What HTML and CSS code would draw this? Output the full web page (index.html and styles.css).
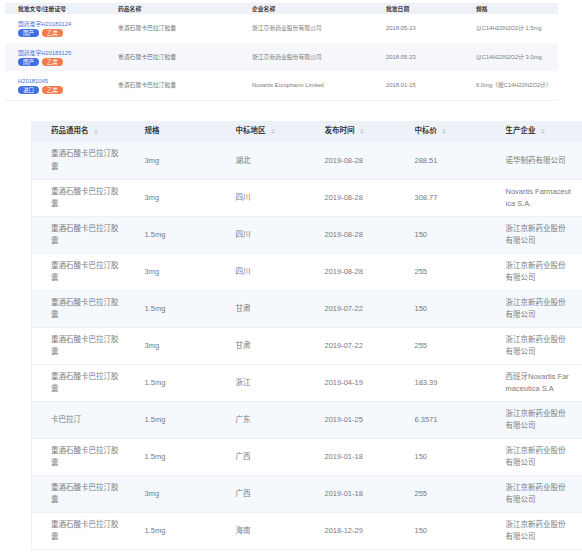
FILE: index.html
```html
<!DOCTYPE html>
<html lang="zh">
<head>
<meta charset="utf-8">
<title>药品中标信息</title>
<link rel="stylesheet" href="styles.css">
</head>
<body>
<div class="page">
  <table class="approvals">
    <thead>
      <tr>
        <th class="c1">批准文号/注册证号</th>
        <th class="c2">药品名称</th>
        <th class="c3">企业名称</th>
        <th class="c4">批准日期</th>
        <th class="c5">规格</th>
      </tr>
    </thead>
    <tbody>
      <tr>
        <td class="c1"><div class="cert"><a class="cert-no">国药准字H20183124</a><div class="tags"><span class="tag tag-blue">国产</span><span class="tag tag-orange">乙类</span></div></div></td>
        <td>重酒石酸卡巴拉汀胶囊</td>
        <td>浙江京新药业股份有限公司</td>
        <td>2018-05-23</td>
        <td>以C14H22N2O2计 1.5mg</td>
      </tr>
      <tr class="striped">
        <td class="c1"><div class="cert"><a class="cert-no">国药准字H20183125</a><div class="tags"><span class="tag tag-blue">国产</span><span class="tag tag-orange">乙类</span></div></div></td>
        <td>重酒石酸卡巴拉汀胶囊</td>
        <td>浙江京新药业股份有限公司</td>
        <td>2018-05-23</td>
        <td>以C14H22N2O2计 3.0mg</td>
      </tr>
      <tr>
        <td class="c1"><div class="cert"><a class="cert-no">H20181045</a><div class="tags"><span class="tag tag-blue">进口</span><span class="tag tag-orange">乙类</span></div></div></td>
        <td>重酒石酸卡巴拉汀胶囊</td>
        <td>Novartis Europharm Limited</td>
        <td>2018-01-15</td>
        <td>6.0mg（按C14H22N2O2计）</td>
      </tr>
    </tbody>
  </table>

  <table class="bids">
    <thead>
      <tr>
        <th class="b1">药品通用名<span class="sort"></span></th>
        <th class="b2">规格</th>
        <th class="b3">中标地区<span class="sort"></span></th>
        <th class="b4">发布时间<span class="sort"></span></th>
        <th class="b5">中标价<span class="sort"></span></th>
        <th class="b6">生产企业<span class="sort"></span></th>
      </tr>
    </thead>
    <tbody>
      <tr class="striped"><td>重酒石酸卡巴拉汀胶囊</td><td>3mg</td><td>湖北</td><td>2019-08-28</td><td>288.51</td><td>诺华制药有限公司</td></tr>
      <tr><td>重酒石酸卡巴拉汀胶囊</td><td>3mg</td><td>四川</td><td>2019-08-28</td><td>308.77</td><td>Novartis Farmaceutica S.A.</td></tr>
      <tr class="striped"><td>重酒石酸卡巴拉汀胶囊</td><td>1.5mg</td><td>四川</td><td>2019-08-28</td><td>150</td><td>浙江京新药业股份有限公司</td></tr>
      <tr><td>重酒石酸卡巴拉汀胶囊</td><td>3mg</td><td>四川</td><td>2019-08-28</td><td>255</td><td>浙江京新药业股份有限公司</td></tr>
      <tr class="striped"><td>重酒石酸卡巴拉汀胶囊</td><td>1.5mg</td><td>甘肃</td><td>2019-07-22</td><td>150</td><td>浙江京新药业股份有限公司</td></tr>
      <tr><td>重酒石酸卡巴拉汀胶囊</td><td>3mg</td><td>甘肃</td><td>2019-07-22</td><td>255</td><td>浙江京新药业股份有限公司</td></tr>
      <tr><td>重酒石酸卡巴拉汀胶囊</td><td>1.5mg</td><td>浙江</td><td>2019-04-19</td><td>183.39</td><td>西班牙Novartis Farmaceutica S.A</td></tr>
      <tr class="striped"><td>卡巴拉汀</td><td>1.5mg</td><td>广东</td><td>2019-01-25</td><td>6.3571</td><td>浙江京新药业股份有限公司</td></tr>
      <tr><td>重酒石酸卡巴拉汀胶囊</td><td>1.5mg</td><td>广西</td><td>2019-01-18</td><td>150</td><td>浙江京新药业股份有限公司</td></tr>
      <tr class="striped"><td>重酒石酸卡巴拉汀胶囊</td><td>3mg</td><td>广西</td><td>2019-01-18</td><td>255</td><td>浙江京新药业股份有限公司</td></tr>
      <tr><td>重酒石酸卡巴拉汀胶囊</td><td>1.5mg</td><td>海南</td><td>2018-12-29</td><td>150</td><td>浙江京新药业股份有限公司</td></tr>
    </tbody>
  </table>
</div>
</body>
</html>
```

FILE: styles.css
```css
html, body {
  margin: 0;
  padding: 0;
  background: #ffffff;
  overflow: hidden;
}

body {
  font-family: "Liberation Sans", "Noto Sans CJK SC", sans-serif;
  color: #7a7a7a;
}

.page {
  padding-top: 3px;
}

/* ---------- approvals table ---------- */
.approvals {
  margin-left: 5px;
  width: 553px;
  border-collapse: collapse;
  table-layout: fixed;
  font-size: 5.8px;
  line-height: 8px;
}

.approvals th,
.approvals td {
  padding: 0;
  text-align: left;
  box-sizing: border-box;
  white-space: nowrap;
}

.approvals th {
  height: 11px;
  background: #eef1f8;
  color: #3a3a3a;
  font-weight: bold;
}

.approvals td {
  height: 28.7px;
  vertical-align: middle;
}

.approvals .c1 { width: 113px; padding-left: 13px; }
.approvals .c2 { width: 134px; }
.approvals .c3 { width: 134px; }
.approvals .c4 { width: 90px; }
.approvals .c5 { width: 82px; }

.approvals tr.striped td {
  background: #f5f7fb;
}

.approvals tbody tr:last-child td {
  border-bottom: 1px solid #eef0f4;
}

.cert {
  display: flex;
  flex-direction: column;
  gap: 1px;
}

.cert-no {
  color: #4a72d9;
}

.tags {
  display: flex;
  gap: 3px;
}

.tag {
  display: inline-flex;
  align-items: center;
  justify-content: center;
  width: 21px;
  height: 8px;
  border-radius: 4px;
  color: #ffffff;
  font-size: 5.5px;
  line-height: 8px;
}

.tag-blue { background: #3f6fe0; }
.tag-orange { background: #f37a4b; }

/* ---------- bids table ---------- */
.bids {
  margin: 20px 0 0 31px;
  width: 551px;
  border-collapse: collapse;
  table-layout: fixed;
  font-size: 7.5px;
  line-height: 12.5px;
  border-left: 1px solid #eef0f4;
}

.bids th,
.bids td {
  box-sizing: border-box;
  text-align: left;
  padding: 0 3px 0 19px;
  word-break: break-all;
}

.bids th {
  height: 22px;
  background: #edf1f8;
  color: #3a3a3a;
  font-weight: bold;
  white-space: nowrap;
}

.bids td {
  height: 37px;
  padding-top: 5px;
  padding-bottom: 5px;
  vertical-align: middle;
  border-bottom: 1px solid #eef0f4;
}

.bids td:last-child,
.bids th:last-child {
  padding-right: 10px;
}

.bids .b1 { width: 94px; }
.bids .b2 { width: 91px; }
.bids .b3 { width: 89px; }
.bids .b4 { width: 90px; }
.bids .b5 { width: 91px; }
.bids .b6 { width: 96px; }

.bids tr.striped td {
  background: #f5f8fc;
}

.sort {
  display: inline-flex;
  flex-direction: column;
  gap: 1px;
  margin-left: 5px;
  vertical-align: middle;
}

.sort::before,
.sort::after {
  content: "";
  display: block;
  width: 0;
  height: 0;
  border-left: 2px solid transparent;
  border-right: 2px solid transparent;
}

.sort::before {
  border-bottom: 2.5px solid #c8ccd4;
}

.sort::after {
  border-top: 2.5px solid #c8ccd4;
}
```
